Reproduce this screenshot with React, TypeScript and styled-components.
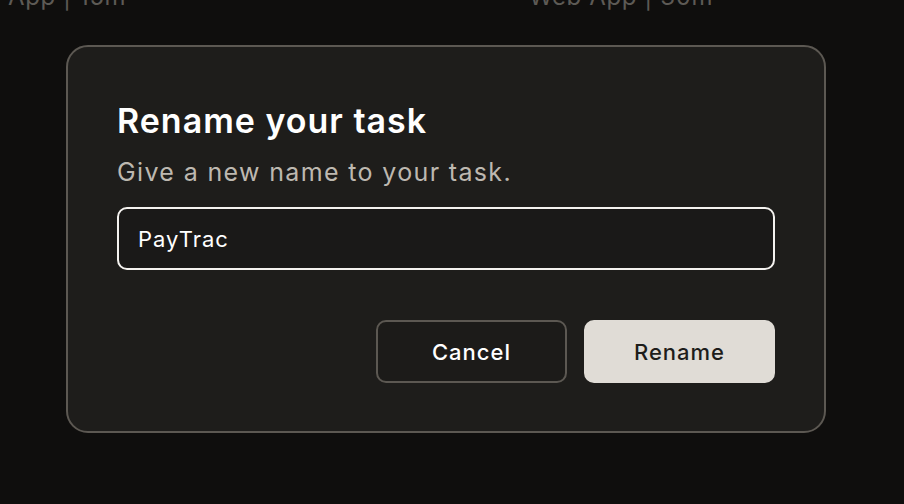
import React from "react";
import styled, { createGlobalStyle } from "styled-components";

const Global = createGlobalStyle`
  html, body { margin: 0; padding: 0; background: #0f0e0d; }
  body { width: 904px; height: 504px; overflow: hidden; font-family: Inter, "Noto Sans", sans-serif; }
  * { box-sizing: border-box; }
`;

const Page = styled.div`
  position: relative;
  width: 904px;
  height: 504px;
  background: #0f0e0d;
  overflow: hidden;
`;

const BackdropRow = styled.div`
  display: flex;
  height: 0;
`;

const BackdropLabel = styled.span<{ $width: number }>`
  display: block;
  flex: none;
  width: ${(p) => p.$width}px;
  transform: translateY(-15px);
  font-family: Inter, "Noto Sans", sans-serif;
  font-size: 24px;
  line-height: 24px;
  letter-spacing: 0.6px;
  color: #5d5a55;
  white-space: nowrap;
`;

const Center = styled.div`
  display: flex;
  justify-content: flex-start;
  padding: 45px 0 0 66px;
`;

const Dialog = styled.div`
  width: 760px;
  height: 388px;
  background: #1e1d1b;
  border: 2px solid #5c5852;
  border-radius: 22px;
  padding: 54px 49px 48px 49px;
  display: flex;
  flex-direction: column;
`;

const Title = styled.h2`
  margin: 0;
  font-size: 34px;
  font-weight: 600;
  color: #ffffff;
  letter-spacing: 1px;
  line-height: 40px;
`;

const Subtitle = styled.p`
  margin: 16px 0 0;
  font-size: 25px;
  font-weight: 400;
  color: #bdb8b0;
  line-height: 30px;
  letter-spacing: 1.35px;
`;

const Input = styled.input`
  margin-top: 20px;
  width: 100%;
  height: 63px;
  background: #1a1918;
  border: 2px solid #f4f2ef;
  border-radius: 10px;
  padding: 0 19px;
  font-family: Inter, "Noto Sans", sans-serif;
  font-size: 22px;
  letter-spacing: 1px;
  color: #ffffff;
  outline: none;
`;

const Actions = styled.div`
  margin-top: auto;
  display: flex;
  justify-content: flex-end;
  gap: 17px;
`;

const Button = styled.button<{ $primary?: boolean }>`
  width: 191px;
  height: 63px;
  border-radius: 10px;
  font-family: Inter, "Noto Sans", sans-serif;
  font-size: 22px;
  font-weight: 500;
  letter-spacing: 1px;
  cursor: pointer;
  background: ${(p) => (p.$primary ? "#e0dcd6" : "#1c1b19")};
  color: ${(p) => (p.$primary ? "#1e1d1b" : "#ffffff")};
  border: 2px solid ${(p) => (p.$primary ? "#e0dcd6" : "#5c5852")};
`;

export default function App() {
  return (
    <Page>
      <Global />
      <BackdropRow>
        <BackdropLabel $width={8} />
        <BackdropLabel $width={521}>App | 15m</BackdropLabel>
        <BackdropLabel $width={300}>Web App | 30m</BackdropLabel>
      </BackdropRow>
      <Center>
        <Dialog>
          <Title>Rename your task</Title>
          <Subtitle>Give a new name to your task.</Subtitle>
          <Input defaultValue="PayTrac" />
          <Actions>
            <Button>Cancel</Button>
            <Button $primary>Rename</Button>
          </Actions>
        </Dialog>
      </Center>
    </Page>
  );
}
